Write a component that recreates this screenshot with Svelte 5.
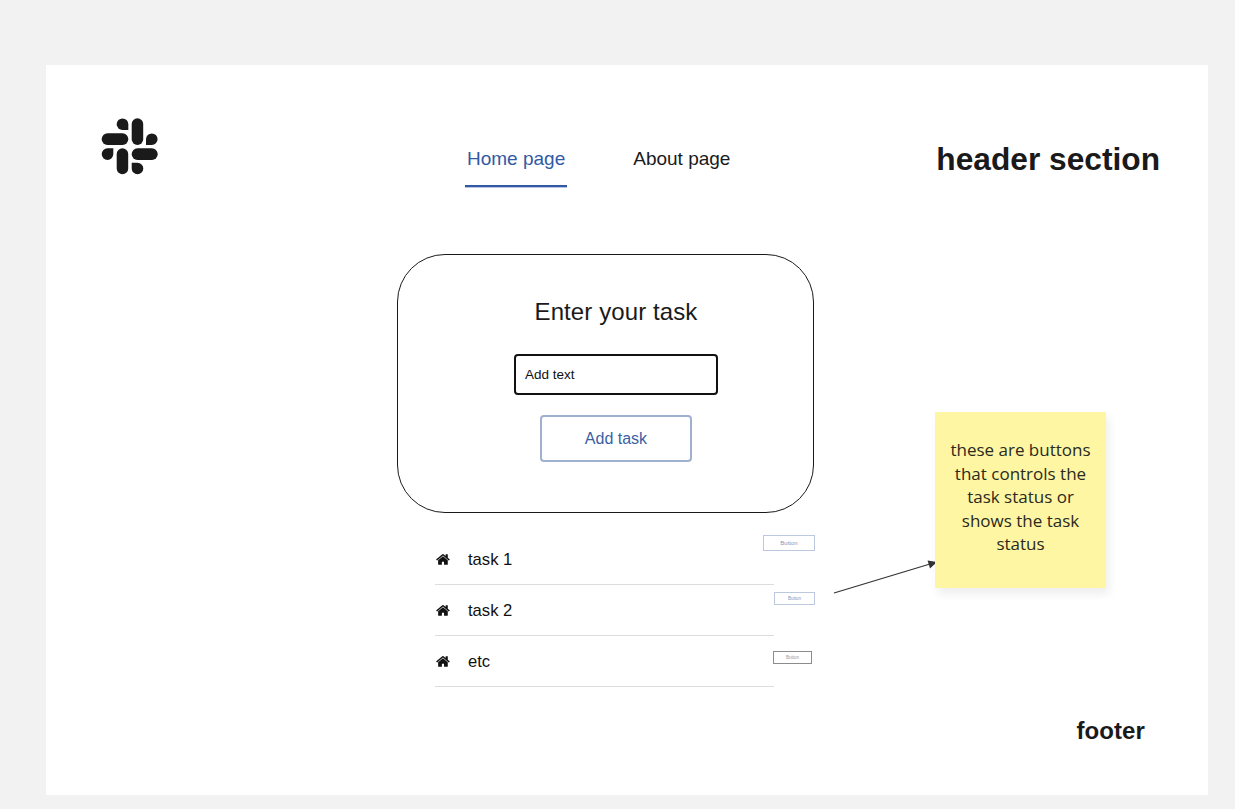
<script>
  const tasks = ['task 1', 'task 2', 'etc'];
  const home = 'M1408 992v480q0 26-19 45t-45 19h-384v-384h-256v384h-384q-26 0-45-19t-19-45v-480q0-1 .5-3t.5-3l575-474 575 474q1 2 1 6zm223-69l-62 74q-8 9-21 11h-3q-13 0-21-7l-692-577-692 577q-12 8-24 7-13-2-21-11l-62-74q-8-10-7-23.500t11-21.500l719-599q32-26 76-26t76 26l244 204v-195q0-14 9-23t23-9h192q14 0 23 9t9 23v408l219 182q10 8 11 21.500t-7 23.500z';
</script>

<div class="frame">
  <header class="header">
    <svg class="logo" viewBox="0 0 58 57" width="58" height="57" aria-label="logo">
      <g fill="#1a1a1a">
        <path d="M27.300 12H21.500A5.800 5.800 0 1 1 27.300 6.200Z" />
        <rect x="30.700" y="0.300" width="11.500" height="26.700" rx="5.750" />
        <rect x="0.700" y="15.300" width="26.600" height="11.700" rx="5.800" />
        <path d="M45 27V21.200A5.800 5.800 0 1 1 50.800 27Z" />
        <path d="M12.300 30.300V36.100A5.800 5.800 0 1 1 6.500 30.300Z" />
        <rect x="15.700" y="30.300" width="11.500" height="26" rx="5.750" />
        <rect x="30.700" y="30.300" width="26" height="11.700" rx="5.800" />
        <path d="M30.700 44.700H36.500A5.800 5.800 0 1 1 30.700 50.500Z" />
      </g>
    </svg>
    <nav class="nav">
      <span class="tab active">Home page</span>
      <span class="tab">About page</span>
    </nav>
    <h1 class="section">header section</h1>
  </header>

  <section class="card">
    <h2>Enter your task</h2>
    <div class="input">Add text</div>
    <button class="add">Add task</button>
  </section>

  <ul class="list">
    {#each tasks as task}
      <li>
        <svg viewBox="0 0 1792 1792" width="15" height="15"><path d={home} fill="#111" /></svg>
        <span>{task}</span>
      </li>
    {/each}
  </ul>

  <footer class="footer">footer</footer>

  <span class="mini m1">Button</span>
  <span class="mini m2">Button</span>
  <span class="mini m3">Button</span>

  <svg class="arrow" width="110" height="40" viewBox="0 0 110 40">
    <line x1="2" y1="34" x2="98" y2="5" stroke="#333" stroke-width="1.200" />
    <path d="M105 3 L95.500 1.500 L98 9.500Z" fill="#333" />
  </svg>

  <aside class="sticky">these are buttons that controls the task status or shows the task status</aside>
</div>

<style>
  :global(body) {
    margin: 0;
    background: #f2f2f2;
    height: 809px;
    overflow: hidden;
  }
  .frame {
    position: relative;
    margin-left: 46px;
    top: 65px;
    width: 1162px;
    height: 730px;
    background: #fff;
    font-family: "Liberation Sans", Arial, sans-serif;
    color: #1a1a1a;
    display: flex;
    flex-direction: column;
  }
  .header {
    display: flex;
    align-items: flex-start;
    height: 57px;
    padding: 53px 48px 0 55px;
  }
  .logo { flex: none; }
  .nav {
    display: flex;
    gap: 64px;
    margin-left: 306px;
    margin-top: 30px;
  }
  .tab {
    font-size: 19px;
    line-height: 22px;
    padding: 0 2px 15px;
    border-bottom: 2px solid transparent;
  }
  .tab.active {
    color: #3159a5;
    border-bottom-color: #3159a5;
    box-shadow: 0 1px 0 rgba(49, 89, 165, 0.35);
  }
  .section {
    margin: 22px 0 0 auto;
    font-size: 31.700px;
    line-height: 38px;
    font-weight: 700;
  }
  .card {
    box-sizing: border-box;
    margin: 79px 0 0 351px;
    width: 417px;
    height: 259px;
    border: 1px solid #1a1a1a;
    border-radius: 48px;
    display: flex;
    flex-direction: column;
    align-items: center;
    padding: 43px 0 0 21px;
  }
  .card h2 {
    margin: 0;
    font-size: 24px;
    line-height: 28px;
    font-weight: 400;
    letter-spacing: 0.100px;
  }
  .input {
    box-sizing: border-box;
    width: 204px;
    height: 41px;
    margin-top: 28px;
    padding-left: 9px;
    border: 2px solid #111;
    border-radius: 4px;
    font-size: 13.500px;
    line-height: 37px;
    color: #111;
  }
  .add {
    box-sizing: border-box;
    width: 152px;
    height: 47px;
    margin-top: 20px;
    background: #fff;
    border: 2px solid #a0b1d0;
    border-radius: 4px;
    font: 16px "Liberation Sans", Arial, sans-serif;
    color: #3a5fa5;
  }
  .list {
    list-style: none;
    margin: 21px 0 0 389px;
    padding: 0;
    width: 339px;
  }
  .list li {
    box-sizing: border-box;
    height: 51px;
    padding-top: 1px;
    border-bottom: 1px solid #ddd;
    display: flex;
    align-items: center;
    gap: 17px;
    font-size: 16.600px;
    color: #111;
  }
  .list li svg { flex: none; margin: 0 0 0 1px; }
  .footer {
    margin: 30px 63px 0 auto;
    font-size: 24px;
    line-height: 28px;
    font-weight: 700;
    letter-spacing: 0.100px;
  }
  .mini {
    position: absolute;
    box-sizing: border-box;
    display: flex;
    align-items: center;
    justify-content: center;
    background: #fff;
    border: 1px solid #bcc8dd;
    color: #7f96c4;
  }
  .m1 { left: 717px; top: 470px; width: 52px; height: 16px; font-size: 6px; }
  .m2 { left: 728px; top: 527px; width: 41px; height: 13px; font-size: 4.500px; }
  .m3 { left: 727px; top: 586px; width: 39px; height: 13px; font-size: 4.500px; border-color: #8c8c8c; color: #999; }
  .arrow {
    position: absolute;
    left: 786px;
    top: 494px;
  }
  .sticky {
    position: absolute;
    left: 889px;
    top: 347px;
    box-sizing: border-box;
    width: 171px;
    height: 176px;
    padding: 0 12px 6px;
    background: #fff6a3;
    box-shadow: 3px 6px 9px rgba(0, 0, 0, 0.07);
    display: flex;
    align-items: center;
    justify-content: center;
    text-align: center;
    font-family: "Open Sans", sans-serif;
    font-size: 17px;
    line-height: 23.500px;
    color: #2a2a20;
  }
</style>
